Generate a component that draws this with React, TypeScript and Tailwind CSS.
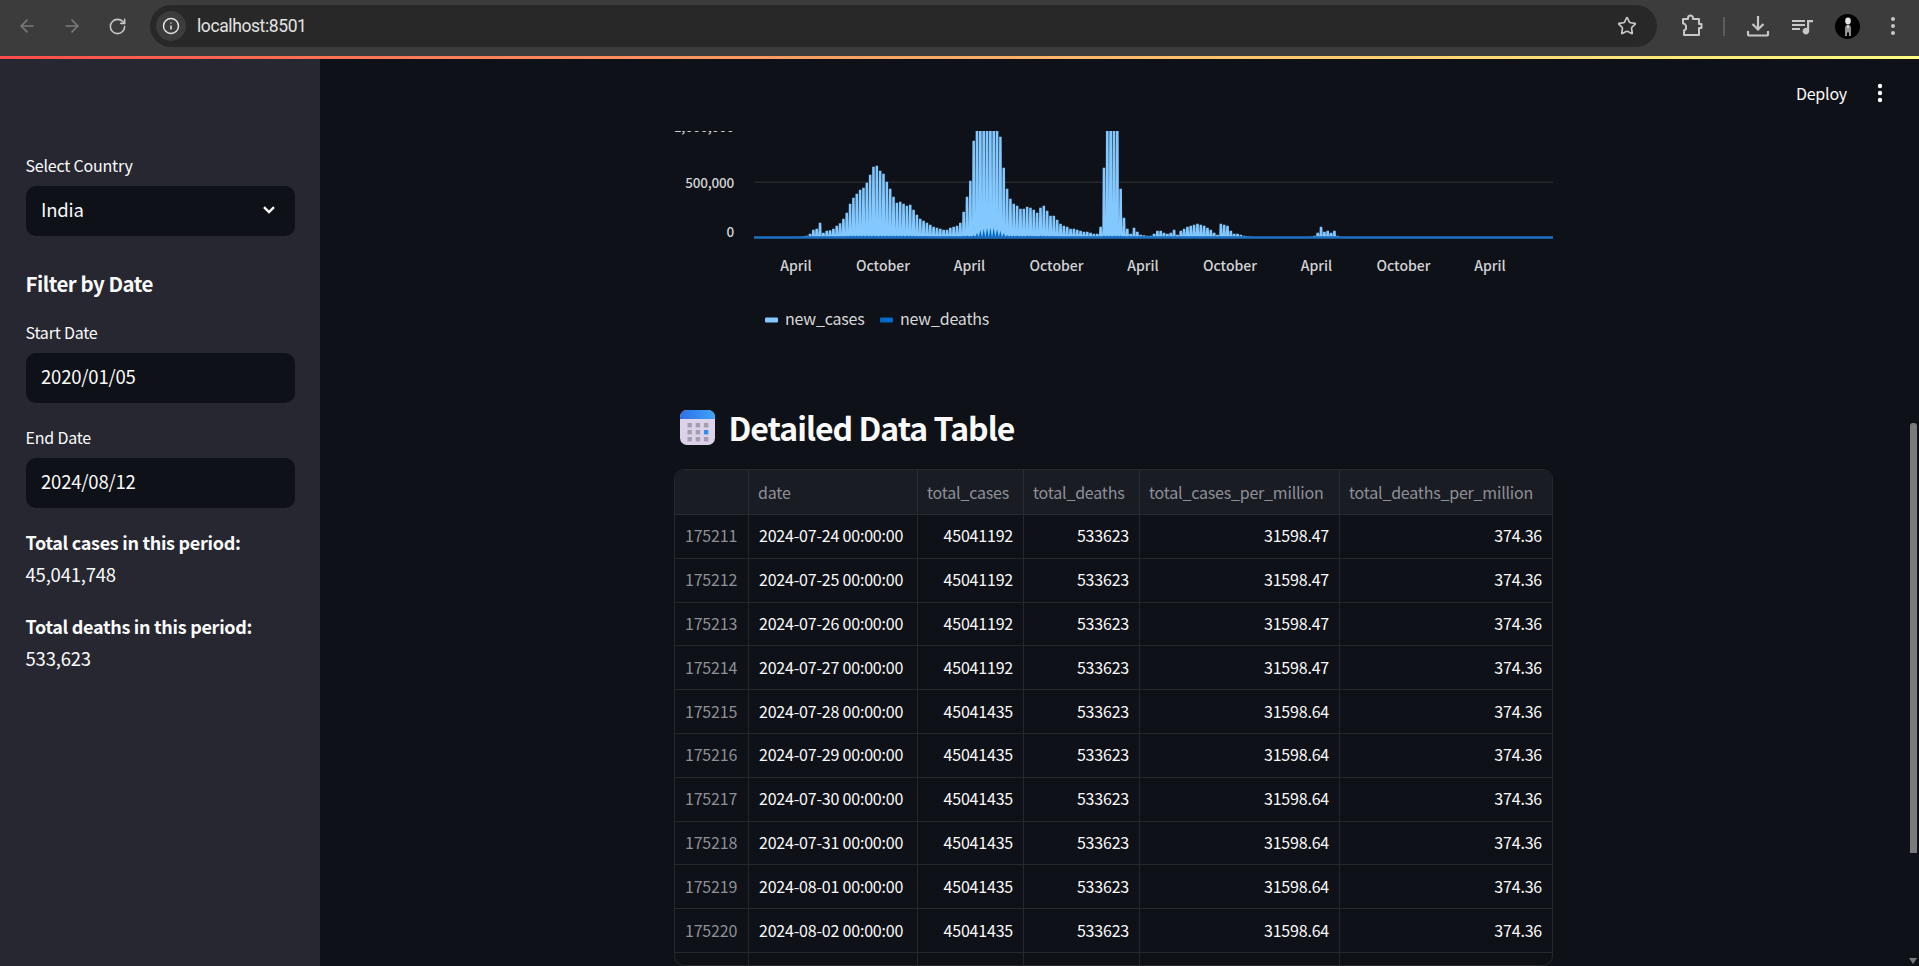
import { ArrowLeft, ArrowRight, Info, RotateCw, Star } from "lucide-react";

const SOURCE_FONT = "font-['Noto_Sans_CJK_SC','Noto_Sans',sans-serif]";

// bar heights in px, read off the chart (130 = clipped at the top)
const CASES = [
  1, 1.5, 2, 4, 8, 9, 15, 5, 7, 7.5, 9, 12, 14.5, 19, 25, 34, 40, 44, 48, 50, 55, 63, 71, 72, 67, 64, 56, 49, 41, 35,
  36, 34, 32, 33, 28, 23, 19, 17, 15, 13, 11, 10, 9, 8, 8, 10, 11, 12, 15, 26, 41, 57, 97, 130, 130, 130, 130, 130,
  130, 130, 101, 70, 49, 39, 34, 32, 29, 29, 31, 30, 28, 25, 30, 32, 27, 22, 22, 18, 14, 12, 11, 9, 9, 8, 7, 6, 6, 5,
  4, 4, 11, 70, 130, 130, 130, 130, 49, 20, 9, 4, 10, 6, 3, 2.5, 2, 2, 4, 7, 7, 5, 4, 5, 8, 3, 7, 9, 11, 12, 13, 14,
  13, 12, 10, 8, 5, 3, 14, 13, 12, 7, 4, 4, 3, 2, 1.5, 1, 0.4, 0.4, 0.4, 0.4, 0.4, 0.4, 0.4, 0.4, 0.4, 0.4, 0.4, 0.4,
  0.4, 0.4, 0.4, 0.4, 0.4, 1, 2, 5, 11, 6, 7, 5, 7, 2, 1,
];

// death spikes around the second wave
const DEATH_BUMP: Record<number, number> = {
  51: 2, 52: 3, 53: 5, 54: 8, 55: 9, 56: 10, 57: 10, 58: 10, 59: 9, 60: 7, 61: 5, 62: 3,
};

const X0 = 126;
const STEP = 3.34;
const BASE = 106.7;

function casesPath() {
  let d = `M${X0 - 2} ${BASE}`;
  CASES.forEach((h, i) => {
    const x = X0 + i * STEP;
    const next = CASES[i + 1] ?? 0;
    d += ` L${x - 1.25} ${BASE - h} L${x + 1.25} ${BASE - h} L${x + STEP / 2} ${BASE - Math.min(h, next) * 0.25}`;
  });
  return d + ` L${X0 + CASES.length * STEP} ${BASE} Z`;
}

function deathsPath() {
  let d = `M${X0 - 2} ${BASE}`;
  CASES.forEach((h, i) => {
    const x = X0 + i * STEP;
    const top = DEATH_BUMP[i] ?? Math.min(h * 0.08, 2.5);
    d += ` L${x} ${BASE - top} L${x + STEP / 2} ${BASE}`;
  });
  return d + " Z";
}

const X_TICKS = [
  { x: 122, label: "April" },
  { x: 209, label: "October" },
  { x: 295.5, label: "April" },
  { x: 382.5, label: "October" },
  { x: 469, label: "April" },
  { x: 556, label: "October" },
  { x: 642.5, label: "April" },
  { x: 729.5, label: "October" },
  { x: 816, label: "April" },
];

function Chart() {
  return (
    <svg width="879" height="209" viewBox="0 0 879 209" className={`block shrink-0 ${SOURCE_FONT}`}>
      <line x1="80" x2="879" y1="51.3" y2="51.3" stroke="#26282e" strokeWidth="1.5" />
      <g fontSize="13.5" fontWeight="500" fill="#d2d3d6" textAnchor="end" letterSpacing="-0.2">
        <text x="60" y="1">1,000,000</text>
        <text x="60" y="56.5">500,000</text>
        <text x="60" y="105.5">0</text>
      </g>
      <path d={casesPath()} fill="#83c9ff" />
      <path d={deathsPath()} fill="#0068c9" />
      <rect x="80" y="105.2" width="799" height="2.6" fill="#1c6dbb" />
      <g fontSize="14" fontWeight="500" fill="#d2d3d6" textAnchor="middle">
        {X_TICKS.map((t) => (
          <text key={t.x} x={t.x} y="139.5">{t.label}</text>
        ))}
      </g>
      <rect x="91" y="186.5" width="13" height="5" rx="1" fill="#83c9ff" />
      <text x="111" y="193.5" fontSize="16" letterSpacing="-0.2" fill="#d7d8da">new_cases</text>
      <rect x="206" y="186.5" width="13" height="5" rx="1" fill="#0068c9" />
      <text x="226" y="193.5" fontSize="16" letterSpacing="-0.2" fill="#d7d8da">new_deaths</text>
    </svg>
  );
}

function CalendarIcon() {
  const cells = [0, 1, 2, 3, 4, 5, 6, 7, 8];
  return (
    <svg width="35" height="35" viewBox="0 0 35 35" className="shrink-0">
      <defs>
        <linearGradient id="calTop" x1="0" x2="1" y1="0" y2="0">
          <stop offset="0" stopColor="#2f6fe8" />
          <stop offset="1" stopColor="#3ea4f8" />
        </linearGradient>
      </defs>
      <rect width="35" height="35" rx="7" fill="#dcd2ea" />
      <path d="M0 9 V7 A7 7 0 0 1 7 0 H28 A7 7 0 0 1 35 7 V9 Z" fill="url(#calTop)" />
      {cells.map((c) => (
        <rect
          key={c}
          x={7.5 + (c % 3) * 8.2}
          y={13 + Math.floor(c / 3) * 7}
          width="4.4"
          height="4.4"
          fill={c === 5 ? "#2f8cf0" : "#a29daf"}
        />
      ))}
    </svg>
  );
}

function ChromeBar() {
  return (
    <div className="relative flex h-[56px] shrink-0 items-center bg-[#3c3c3c] pb-[4px] text-[#c7c7c7]">
      <div className="flex w-[150px] shrink-0 items-center pl-[17px]">
        <ArrowLeft size={20} strokeWidth={2} className="text-[#7a7a7a]" />
        <ArrowRight size={20} strokeWidth={2} className="ml-[25px] text-[#7a7a7a]" />
        <RotateCw size={19} strokeWidth={2} className="ml-[26px] text-[#c7c7c7]" />
      </div>
      <div className="flex h-[42px] w-[1507px] shrink-0 items-center rounded-full bg-[#282828] pl-[6px] pr-[20px]">
        <span className="flex h-[30px] w-[30px] items-center justify-center rounded-full bg-[#3c3c3c]">
          <Info size={18} strokeWidth={2} className="text-[#e3e3e3]" />
        </span>
        <span className="ml-[11px] flex-1 font-['Roboto',sans-serif] text-[17.5px] tracking-[-0.4px] text-[#e3e3e3]">
          localhost:8501
        </span>
        <Star size={20} strokeWidth={2} className="text-[#c7c7c7]" />
      </div>
      <svg width="24" height="24" viewBox="0 0 24 24" fill="none" stroke="#c7c7c7" strokeWidth="2" className="ml-[23px] shrink-0">
        <path d="M3 5 H8 V4 A2.5 2.5 0 0 1 13 4 V5 H19 V10 H21.5 V14 H19 V21 H4 V16.5 A3 3 0 0 0 6 13 A3 3 0 0 0 3 9.5 Z" strokeLinejoin="round" />
      </svg>
      <span className="ml-[19px] h-[19px] w-[2px] shrink-0 bg-[#5c5c5c]" />
      <svg width="24" height="24" viewBox="0 0 24 24" fill="none" stroke="#c7c7c7" strokeWidth="2.2" className="ml-[21px] shrink-0">
        <path d="M12 2 V15 M6.5 10 L12 15.5 L17.5 10" />
        <path d="M2 17 V20 A1.5 1.5 0 0 0 3.5 21.5 H20.5 A1.5 1.5 0 0 0 22 20 V17" />
      </svg>
      <svg width="24" height="24" viewBox="0 0 24 24" fill="#c7c7c7" className="ml-[21px] shrink-0">
        <rect x="1" y="6" width="13" height="2" />
        <rect x="1" y="10" width="13" height="2" />
        <rect x="1" y="14" width="8" height="2" />
        <path d="M16 6 H22 V8.2 H18.2 V17 A3.3 3.3 0 1 1 16 14 Z" />
      </svg>
      <div className="relative ml-[20px] flex h-[25px] w-[25px] shrink-0 items-center justify-center rounded-full bg-black">
        <svg width="10" height="20" viewBox="0 0 10 20">
          <ellipse cx="5" cy="5" rx="2.8" ry="3.4" fill="#e6e6e6" />
          <path d="M2 20 V11 L3.5 9 H6.5 L8 11 V20 H6 V12 H4 V20 Z" fill="#8f8f8f" />
          <rect x="4.4" y="9.5" width="1.2" height="7" fill="#ffffff" />
        </svg>
      </div>
      <svg width="6" height="20" viewBox="0 0 6 20" fill="#c7c7c7" className="ml-[30px] shrink-0">
        <circle cx="3" cy="3" r="2" />
        <circle cx="3" cy="10" r="2" />
        <circle cx="3" cy="17" r="2" />
      </svg>
    </div>
  );
}

function FieldLabel({ children }: { children: string }) {
  return <div className="h-[26px] text-[16px] leading-[26px] tracking-[-0.2px] text-[#fafafa]">{children}</div>;
}

function Field({ children }: { children: React.ReactNode }) {
  return (
    <div className="mt-[8px] flex h-[50px] items-center justify-between rounded-[10px] bg-[#0e1117] pb-[2px] pl-[15.5px] pr-[16px] text-[18.5px] tracking-[-0.2px] text-[#fafafa]">
      {children}
    </div>
  );
}

function Sidebar() {
  return (
    <aside className="flex w-[320px] shrink-0 flex-col bg-[#262730] pl-[25.5px] pr-[25px] pt-[93px] text-[#fafafa]">
      <FieldLabel>Select Country</FieldLabel>
      <Field>
        India
        <svg width="12" height="8" viewBox="0 0 12 8" fill="none" stroke="#fafafa" strokeWidth="2.4" className="mr-[4px]">
          <path d="M1 1.2 L6 6 L11 1.2" />
        </svg>
      </Field>
      <div className="mt-[29px] h-[36px] text-[20.5px] font-bold leading-[36px] tracking-[-0.5px]">Filter by Date</div>
      <div className="mt-[18px]">
        <FieldLabel>Start Date</FieldLabel>
      </div>
      <Field>2020/01/05</Field>
      <div className="mt-[21px]">
        <FieldLabel>End Date</FieldLabel>
      </div>
      <Field>2024/08/12</Field>
      <div className="mt-[18px] text-[18px] font-bold leading-[32px] tracking-[-0.3px]">Total cases in this period:</div>
      <div className="text-[18.5px] leading-[32px] tracking-[-0.2px]">45,041,748</div>
      <div className="mt-[20px] text-[18px] font-bold leading-[32px] tracking-[-0.3px]">Total deaths in this period:</div>
      <div className="text-[18.5px] leading-[32px] tracking-[-0.2px]">533,623</div>
    </aside>
  );
}

const ROWS = [
  ["175211", "2024-07-24 00:00:00", "45041192", "533623", "31598.47", "374.36"],
  ["175212", "2024-07-25 00:00:00", "45041192", "533623", "31598.47", "374.36"],
  ["175213", "2024-07-26 00:00:00", "45041192", "533623", "31598.47", "374.36"],
  ["175214", "2024-07-27 00:00:00", "45041192", "533623", "31598.47", "374.36"],
  ["175215", "2024-07-28 00:00:00", "45041435", "533623", "31598.64", "374.36"],
  ["175216", "2024-07-29 00:00:00", "45041435", "533623", "31598.64", "374.36"],
  ["175217", "2024-07-30 00:00:00", "45041435", "533623", "31598.64", "374.36"],
  ["175218", "2024-07-31 00:00:00", "45041435", "533623", "31598.64", "374.36"],
  ["175219", "2024-08-01 00:00:00", "45041435", "533623", "31598.64", "374.36"],
  ["175220", "2024-08-02 00:00:00", "45041435", "533623", "31598.64", "374.36"],
];

const HEADERS = ["", "date", "total_cases", "total_deaths", "total_cases_per_million", "total_deaths_per_million"];
const GRID = "grid grid-cols-[74px_169px_106px_116px_200px_1fr]";

function DataTable() {
  return (
    <div className="h-[497px] w-[879px] shrink-0 overflow-hidden rounded-[10px] border border-[#26282e] text-[16px] tracking-[-0.2px]">
      <div className={`${GRID} h-[45px] border-b border-[#2a2c33] bg-[#1a1c24] text-[#8d9096]`}>
        {HEADERS.map((h, i) => (
          <div key={i} className="flex items-center whitespace-nowrap border-r border-[#2a2c33] pb-[1px] pl-[9px] last:border-r-0">
            {h}
          </div>
        ))}
      </div>
      {ROWS.map((row) => (
        <div key={row[0]} className={`${GRID} h-[43.8px] border-b border-[#26282e] text-[#fafafa]`}>
          <div className="flex items-center border-r border-[#26282e] pb-[2px] pl-[10px] text-[#8d9096]">{row[0]}</div>
          <div className="flex items-center whitespace-nowrap border-r border-[#26282e] pb-[2px] pl-[10px]">{row[1]}</div>
          {row.slice(2).map((v, i) => (
            <div key={i} className="flex items-center justify-end border-r border-[#26282e] pb-[2px] pr-[10px] last:border-r-0">
              {v}
            </div>
          ))}
        </div>
      ))}
      <div className={`${GRID} h-[14px]`}>
        {[0, 1, 2, 3, 4, 5].map((c) => (
          <div key={c} className="border-r border-[#26282e] last:border-r-0" />
        ))}
      </div>
    </div>
  );
}

export default function App() {
  return (
    <div className={`flex h-[966px] w-full flex-col overflow-hidden bg-[#0e1117] ${SOURCE_FONT}`}>
      <ChromeBar />
      <div className="h-[3px] shrink-0 bg-gradient-to-r from-[#ff4b4b] to-[#fffd80]" />
      <div className="relative flex min-h-0 flex-1">
        <Sidebar />
        <main className="flex min-w-0 flex-1 flex-col pl-[354px] pt-[72px]">
          <Chart />
          <div className="mt-[65px] flex h-[45px] shrink-0 items-center pl-[6px] text-[32px] font-bold tracking-[-1px] text-[#fafafa]">
            <CalendarIcon />
            <span className="ml-[13.5px] pb-[2px]">Detailed Data Table</span>
          </div>
          <div className="mt-[19px]">
            <DataTable />
          </div>
        </main>
        {/* streamlit header floats over the scrolled content */}
        <div className="absolute right-[36px] top-[22px] flex items-center text-[#fafafa]">
          <span className="text-[16px] tracking-[-0.2px]">Deploy</span>
          <svg width="6" height="20" viewBox="0 0 6 20" fill="#fafafa" className="ml-[30px]">
            <circle cx="3" cy="3" r="2.2" />
            <circle cx="3" cy="10" r="2.2" />
            <circle cx="3" cy="17" r="2.2" />
          </svg>
        </div>
        <div className="absolute right-[2px] top-[364px] h-[430px] w-[7px] rounded-t-[3px] bg-[#7b7b7e]" />
        <div className="absolute bottom-[2px] right-[2px] h-0 w-0 border-x-[4px] border-t-[6px] border-x-transparent border-t-[#7b7b7e]" />
      </div>
    </div>
  );
}
